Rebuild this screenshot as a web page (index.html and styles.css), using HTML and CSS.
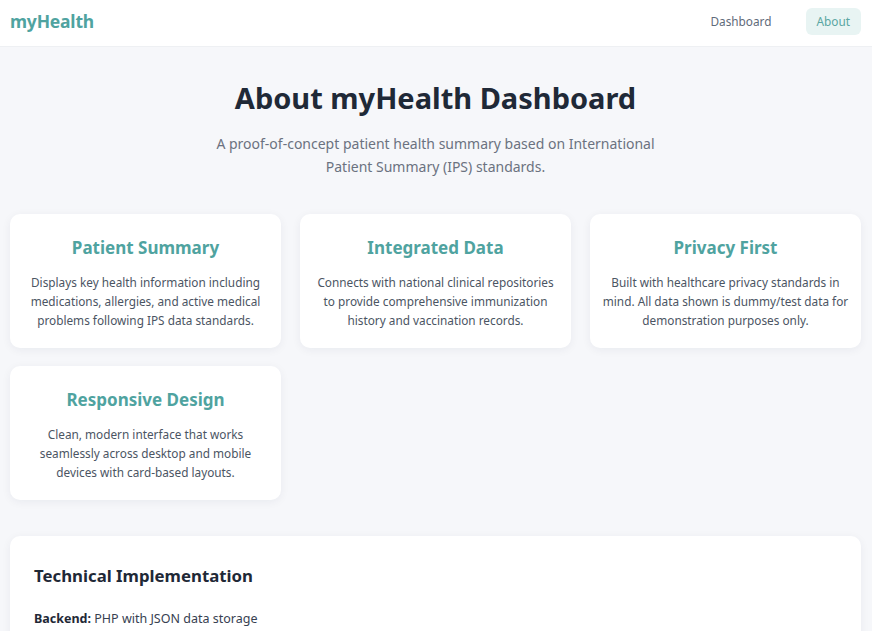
FILE: index.html
```html
<!DOCTYPE html>
<html lang="en">
<head>
<meta charset="utf-8">
<title>About - myHealth</title>
<link rel="stylesheet" href="styles.css">
</head>
<body>
<header class="topbar">
  <div class="brand">myHealth</div>
  <nav class="nav">
    <a class="nav-link" href="#">Dashboard</a>
    <a class="nav-link active" href="#">About</a>
  </nav>
</header>
<main class="page">
  <section class="hero">
    <h1 class="hero-title">About myHealth Dashboard</h1>
    <p class="hero-sub">A proof-of-concept patient health summary based on International Patient Summary (IPS) standards.</p>
  </section>
  <section class="features">
    <div class="card">
      <h3 class="card-title">Patient Summary</h3>
      <p class="card-text">Displays key health information including medications, allergies, and active medical problems following IPS data standards.</p>
    </div>
    <div class="card">
      <h3 class="card-title">Integrated Data</h3>
      <p class="card-text">Connects with national clinical repositories to provide comprehensive immunization history and vaccination records.</p>
    </div>
    <div class="card">
      <h3 class="card-title">Privacy First</h3>
      <p class="card-text">Built with healthcare privacy standards in mind. All data shown is dummy/test data for demonstration purposes only.</p>
    </div>
    <div class="card">
      <h3 class="card-title">Responsive Design</h3>
      <p class="card-text">Clean, modern interface that works seamlessly across desktop and mobile devices with card-based layouts.</p>
    </div>
  </section>
  <section class="tech">
    <h2 class="tech-title">Technical Implementation</h2>
    <p class="tech-line"><strong>Backend:</strong> PHP with JSON data storage</p>
  </section>
</main>
</body>
</html>
```
FILE: styles.css
```css
* { box-sizing: border-box; }
html, body { margin: 0; padding: 0; }
body {
  font-family: "Noto Sans", "Open Sans", sans-serif;
  background: #f6f7fa;
  color: #1f2937;
}
.topbar {
  height: 47px;
  background: #ffffff;
  border-bottom: 1px solid #eef0f3;
  display: flex;
  align-items: center;
  justify-content: space-between;
  padding: 0 11px 4px 10px;
}
.brand {
  font-size: 17.5px;
  font-weight: 700;
  color: #4fa3a0;
  letter-spacing: -0.2px;
}
.nav { display: flex; align-items: center; gap: 34px; }
.nav-link {
  font-size: 11.8px;
  color: #5f6b7a;
  text-decoration: none;
}
.nav-link.active {
  background: #e8f4f3;
  color: #5aa6a2;
  border-radius: 6px;
  padding: 0 11px;
  height: 27px;
  display: flex;
  align-items: center;
}
.page { padding: 0 11px 0 10px; }
.hero { text-align: center; padding-top: 32px; }
.hero-title {
  margin: 0;
  font-size: 29px;
  line-height: 38px;
  font-weight: 700;
  color: #1f2937;
}
.hero-sub {
  margin: 15px auto 0;
  max-width: 470px;
  font-size: 14px;
  line-height: 23px;
  color: #6b7280;
}
.features {
  margin-top: 36px;
  display: grid;
  grid-template-columns: repeat(3, 1fr);
  gap: 18px 19px;
}
.card {
  background: #ffffff;
  border-radius: 10px;
  box-shadow: 0 2px 10px rgba(20, 30, 60, 0.06);
  padding: 23px 12px 18px;
  text-align: center;
  height: 134px;
}
.card-title {
  margin: 0;
  font-size: 17px;
  line-height: 22px;
  font-weight: 700;
  color: #4fa3a0;
}
.card-text {
  margin: 14px 0 0;
  font-size: 11.8px;
  line-height: 19px;
  color: #4b5563;
}
.tech {
  margin-top: 36px;
  background: #ffffff;
  border-radius: 10px;
  box-shadow: 0 2px 10px rgba(20, 30, 60, 0.06);
  padding: 28px 24px 24px;
}
.tech-title {
  margin: 0;
  font-size: 16.8px;
  line-height: 24px;
  font-weight: 700;
  color: #1f2937;
}
.tech-line {
  margin: 21px 0 0;
  font-size: 12.5px;
  line-height: 20px;
  color: #374151;
}
.tech-line strong { font-weight: 700; color: #1f2937; }
```
